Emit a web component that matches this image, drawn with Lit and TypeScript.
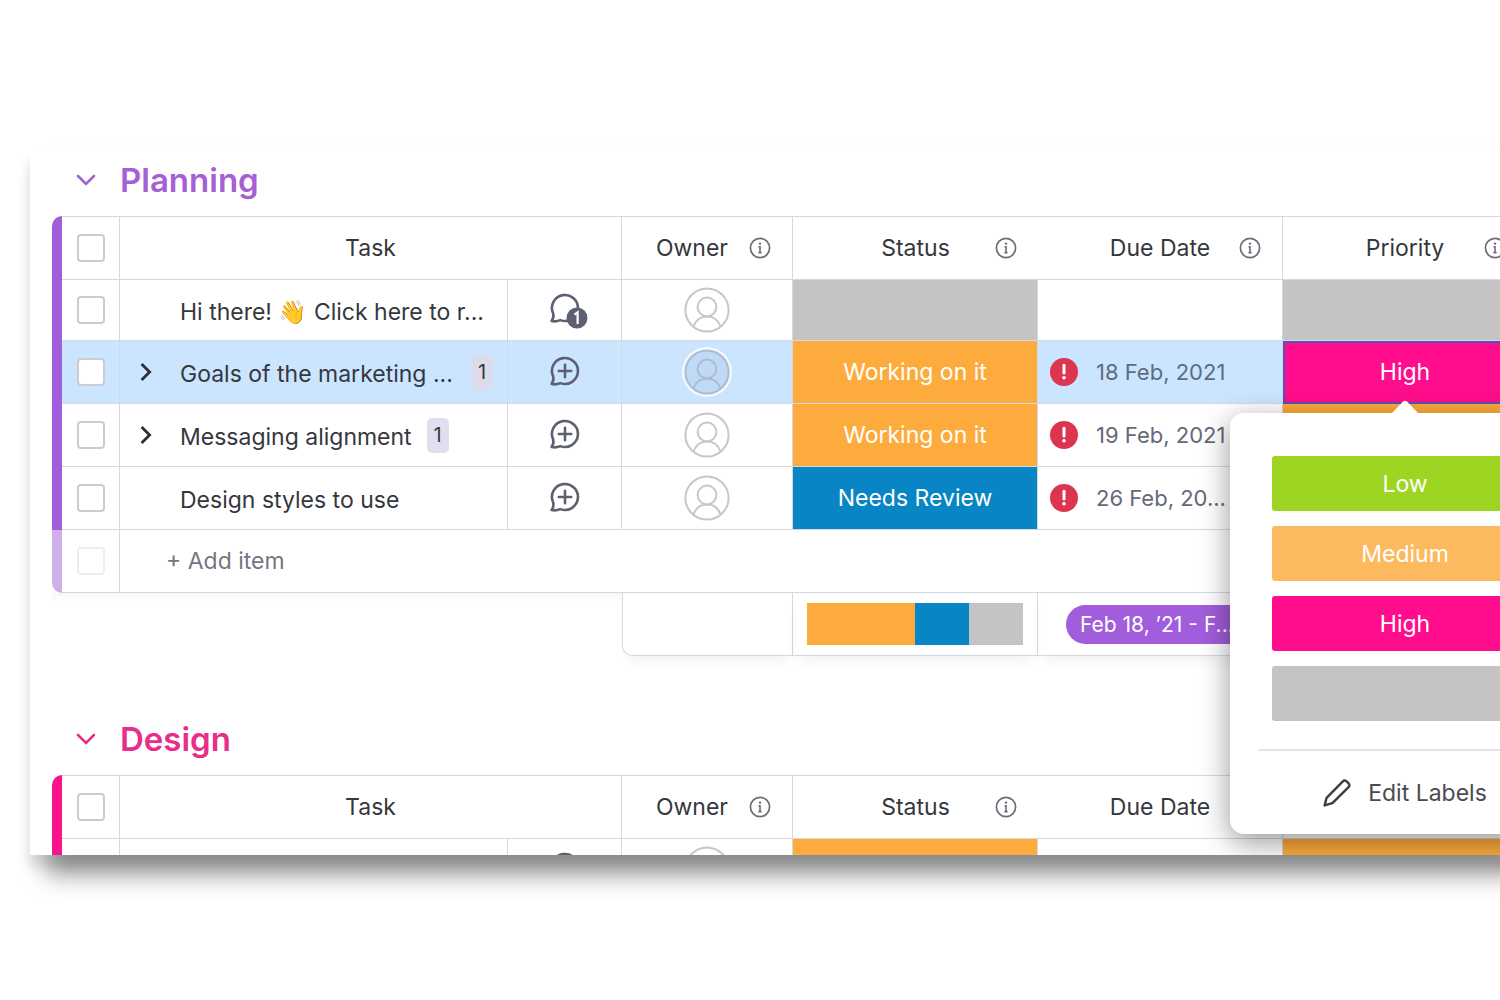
import { LitElement, html, css, nothing, type TemplateResult } from "lit";
import { customElement, property } from "lit/decorators.js";
import { classMap } from "lit/directives/class-map.js";
import { styleMap } from "lit/directives/style-map.js";

type Label = "" | "Working on it" | "Needs Review" | "Low" | "Medium" | "High";

interface Task {
  name: string;
  subitems?: number;
  truncated?: boolean;
  updates?: number;
  status: Label;
  due?: string;
  priority: Label;
  selected?: boolean;
}

interface Group {
  title: string;
  theme: "purple" | "pink";
  tasks: Task[];
  range?: string;
  pending?: boolean;
}

const LABEL_CLASS: Record<Label, string> = {
  "": "grey",
  "Working on it": "orange",
  "Needs Review": "blue",
  Low: "green",
  Medium: "amber",
  High: "magenta",
};

const GROUPS: Group[] = [
  {
    title: "Planning",
    theme: "purple",
    range: "Feb 18, ’21 - F...",
    tasks: [
      { name: "Hi there! 👋 Click here to r...", updates: 1, status: "", priority: "" },
      {
        name: "Goals of the marketing ...",
        subitems: 1,
        truncated: true,
        status: "Working on it",
        due: "18 Feb, 2021",
        priority: "High",
        selected: true,
      },
      { name: "Messaging alignment", subitems: 1, status: "Working on it", due: "19 Feb, 2021", priority: "Medium" },
      { name: "Design styles to use", status: "Needs Review", due: "26 Feb, 20...", priority: "High" },
    ],
  },
  {
    title: "Design",
    theme: "pink",
    pending: true,
    tasks: [{ name: "", updates: 1, status: "Working on it", priority: "Medium" }],
  },
];

const infoIcon = html`<svg class="info" viewBox="0 0 22 22" aria-hidden="true">
  <circle cx="11" cy="11" r="9.6" fill="none" stroke="currentColor" stroke-width="1.7" />
  <circle cx="11" cy="6.6" r="1.2" fill="currentColor" />
  <path d="M9.6 9.9H11V15.6M9.4 15.6H12.6" fill="none" stroke="currentColor" stroke-width="1.6" />
</svg>`;

const bubble = "M5.2 23.5A13 13 0 1 1 12.3 30.1C9.6 31.3 6.8 31.7 3.6 31C5.2 29 5.8 26.4 5.2 23.5Z";

const updateIcon = (count?: number) =>
  count
    ? html`<svg class="chat" viewBox="0 0 44 40" aria-hidden="true">
        <path d=${bubble} fill="none" stroke="currentColor" stroke-width="2.6" stroke-linejoin="round" />
        <circle cx="29" cy="28" r="10.5" fill="currentColor" />
        <path d="M26.4 24.6L29.6 22.4V34" fill="none" stroke="#fff" stroke-width="2.2" />
      </svg>`
    : html`<svg class="chat" viewBox="0 -1 44 40" aria-hidden="true">
        <path d=${bubble} fill="none" stroke="currentColor" stroke-width="2.6" stroke-linejoin="round" />
        <path d="M17 11.8V24.2M10.8 18H23.2" stroke="currentColor" stroke-width="2.6" stroke-linecap="round" />
      </svg>`;

const avatarIcon = html`<svg class="avatar" viewBox="0 0 52 52" aria-hidden="true">
  <circle class="ring" cx="26" cy="26" r="25" />
  <circle class="disc" cx="26" cy="26" r="21.6" />
  <circle class="line" cx="26" cy="23" r="9.4" />
  <path class="line" d="M12.5 42.5C15 35.6 20 32.6 26 32.6S37 35.6 39.5 42.5" />
</svg>`;

const alertIcon = html`<svg class="alert" viewBox="0 0 28 28" aria-hidden="true">
  <circle cx="14" cy="14" r="14" fill="#dc3550" />
  <path d="M14 7.2V15" stroke="#fff" stroke-width="3" stroke-linecap="round" />
  <circle cx="14" cy="19.8" r="1.8" fill="#fff" />
</svg>`;

const pencilIcon = html`<svg class="pencil" viewBox="0 0 28 28" aria-hidden="true">
  <path
    d="M1.6 26.4L3.6 18.8L19.6 2.6C20.8 1.4 22.4 1.4 23.6 2.4L25.6 4.4C26.6 5.6 26.6 7 25.6 8.2L9.4 24.2Z"
    fill="none"
    stroke="currentColor"
    stroke-width="2.4"
    stroke-linejoin="round"
  />
</svg>`;

@customElement("label-picker")
export class LabelPicker extends LitElement {
  static styles = css`
    :host {
      display: block;
      box-sizing: border-box;
      width: 350px;
      padding: 43px 28px 27px;
      border-radius: 14px;
      background: #fff;
      box-shadow: 0 8px 30px rgba(0, 0, 0, 0.42);
      font-family: Inter, "Open Sans", sans-serif;
    }
    .arrow {
      position: absolute;
      top: -13px;
      left: 50%;
      width: 28px;
      height: 14px;
      margin-left: -14px;
      fill: #fff;
    }
    .options {
      display: flex;
      flex-direction: column;
      gap: 15px;
      padding: 0 14px 28px;
      border-bottom: 2px solid #e2e3e8;
    }
    button {
      border: 0;
      padding: 0;
      font: inherit;
      font-size: 23px;
      line-height: 28px;
      cursor: pointer;
    }
    .option {
      height: 55px;
      border-radius: 3px;
      color: #fff;
    }
    .green {
      background: #9dd522;
    }
    .amber {
      background: #fdb95e;
    }
    .magenta {
      background: #ff0d8c;
    }
    .grey {
      background: #c4c4c4;
    }
    .edit {
      display: flex;
      align-items: center;
      justify-content: center;
      gap: 17px;
      width: 100%;
      margin-top: 28px;
      background: none;
      color: #4a4b50;
    }
    .pencil {
      width: 28px;
      height: 28px;
      color: #3c3d42;
    }
  `;

  render() {
    const options: Label[] = ["Low", "Medium", "High", ""];
    return html`
      <svg class="arrow" viewBox="0 0 28 14" aria-hidden="true"><path d="M0 14L12 1.6Q14 0 16 1.6L28 14Z" /></svg>
      <div class="options">
        ${options.map(
          (label) => html`<button class="option ${LABEL_CLASS[label]}" aria-label=${label || "No priority"}>${label}</button>`
        )}
      </div>
      <button class="edit">${pencilIcon}<span>Edit Labels</span></button>
    `;
  }
}

@customElement("board-group")
export class BoardGroup extends LitElement {
  @property({ attribute: false }) group!: Group;

  static styles = css`
    :host {
      display: block;
      --line: #d5d8e3;
    }
    .purple {
      --accent: #a25ddc;
      --accent-soft: #cfb0ea;
    }
    .pink {
      --accent: #f8148c;
      --accent-soft: #fba1d0;
    }
    .title {
      display: flex;
      align-items: center;
      gap: 24px;
      height: 60px;
      margin: 0;
      padding: 0 0 6px 24px;
      color: var(--accent);
      font-size: 33px;
      font-weight: 600;
      line-height: 40px;
    }
    .purple .title {
      color: #a460d4;
    }
    .pink .title {
      color: #e62e8a;
    }
    button {
      border: 0;
      padding: 0;
      background: none;
      color: inherit;
      font: inherit;
      cursor: pointer;
    }
    .toggle,
    .expand {
      display: flex;
    }
    .icon {
      display: block;
      margin: 0 auto;
    }
    .toggle svg {
      width: 20px;
      height: 12px;
    }
    .expand svg {
      width: 14px;
      height: 20px;
    }
    table {
      width: 100%;
      table-layout: fixed;
      border-collapse: separate;
      border-spacing: 0;
    }
    .c-bar {
      width: 10px;
    }
    .c-check {
      width: 58px;
    }
    .c-chat {
      width: 114px;
    }
    .c-owner {
      width: 171px;
    }
    .c-wide {
      width: 245px;
    }
    th,
    td {
      box-sizing: border-box;
      height: 63px;
      padding: 0;
      border-bottom: 1px solid var(--line);
      border-right: 1px solid var(--line);
      font-size: 23px;
      font-weight: 400;
      line-height: 28px;
      text-align: center;
    }
    thead th,
    thead td {
      height: 64px;
      border-top: 1px solid var(--line);
    }
    tbody tr:first-child td {
      height: 61px;
    }
    thead .open {
      border-right: 0;
    }
    td.bar {
      border: 0;
      background: var(--accent);
    }
    thead td.bar {
      border-top-left-radius: 10px;
    }
    .add td.bar {
      background: var(--accent-soft);
      border-bottom-left-radius: 10px;
    }
    .selected td {
      background: #cce5ff;
    }
    .selected td.bar {
      background: var(--accent);
    }
    input {
      appearance: none;
      display: block;
      box-sizing: border-box;
      width: 28px;
      height: 28px;
      margin: 0 auto;
      border: 2px solid #cbccd3;
      border-radius: 4px;
      background: #fff;
    }
    .add input {
      border-color: #ecedf1;
    }
    .head {
      display: grid;
      grid-template-columns: 1fr auto 1fr;
      align-items: center;
    }
    .head .info {
      grid-column: 3;
      justify-self: end;
      margin: 0 21px;
    }
    .head span {
      grid-column: 2;
    }
    .info {
      width: 22px;
      height: 22px;
      color: #6b6d77;
    }
    .task {
      display: grid;
      grid-template-columns: 60px auto auto;
      justify-content: start;
      align-items: center;
      padding-right: 14px;
      text-align: left;
    }
    .task.fill {
      grid-template-columns: 60px 1fr auto;
    }
    .name {
      grid-column: 2;
      padding-top: 4px;
      overflow: hidden;
      white-space: nowrap;
    }
    .expand {
      padding-left: 19px;
      color: #2c2f38;
    }
    .count {
      width: 22px;
      margin-left: 15px;
      border-radius: 5px;
      background: #dfdff0;
      font-size: 20px;
      line-height: 35px;
      text-align: center;
    }
    .selected .count {
      background: #dcdcec;
    }
    .chat {
      display: block;
      width: 44px;
      height: 40px;
      padding-left: 10px;
      color: #5d6070;
    }
    .avatar {
      display: block;
      width: 52px;
      height: 52px;
      fill: none;
    }
    .disc,
    .line {
      stroke: #c6c7cb;
      stroke-width: 2;
    }
    .selected .ring {
      fill: #f3f8ff;
    }
    .selected .disc {
      fill: #bfd9f6;
    }
    .selected .disc,
    .selected .line {
      stroke: #adbbcf;
    }
    td.label {
      color: #fff;
    }
    .label.grey {
      background: #c4c4c4;
    }
    .label.orange,
    .label.amber {
      background: #fdab3d;
    }
    .label.blue {
      background: #0785c4;
    }
    .label.magenta {
      background: #ff0d8c;
    }
    .editing {
      position: relative;
      outline: 2px solid #5a51b8;
      outline-offset: -2px;
    }
    label-picker {
      position: absolute;
      z-index: 2;
      top: calc(100% + 10px);
      left: 50%;
      margin-left: -175px;
    }
    .due {
      display: flex;
      align-items: center;
      gap: 18px;
      padding-left: 12px;
      color: #676879;
      font-size: 22px;
    }
    .selected .due {
      color: #5f6c80;
    }
    .alert {
      width: 28px;
      height: 28px;
    }
    .add .text {
      padding-left: 46px;
      border-right: 0;
      color: #74757f;
      text-align: left;
    }
    tfoot td {
      box-shadow: 0 8px 14px -6px rgba(0, 0, 0, 0.08);
    }
    tfoot .blank {
      border: 0;
      box-shadow: inset 0 12px 12px -12px rgba(0, 0, 0, 0.08);
    }
    tfoot .first {
      border-left: 1px solid var(--line);
      border-bottom-left-radius: 10px;
    }
    .battery {
      display: flex;
      height: 42px;
      margin: 0 14px;
    }
    .seg.orange {
      background: #fdab3d;
    }
    .seg.blue {
      background: #0785c4;
    }
    .seg.grey {
      background: #c4c4c4;
    }
    .range {
      display: block;
      margin: 0 28px;
      padding-left: 14px;
      border-radius: 20px;
      background: #a25ddc;
      color: #fff;
      font-size: 21px;
      line-height: 39px;
      text-align: left;
      white-space: nowrap;
    }
  `;

  private head(text: string, open = false): TemplateResult {
    return html`<th scope="col" class=${open ? "open" : ""}><div class="head"><span>${text}</span>${infoIcon}</div></th>`;
  }

  private row(task: Task): TemplateResult {
    const pending = this.group.pending;
    return html`<tr class=${classMap({ selected: !!task.selected })}>
      <td class="bar"></td>
      <td>${pending ? nothing : html`<input type="checkbox" aria-label="Select ${task.name}" />`}</td>
      <td>
        <div class="task ${task.truncated ? "fill" : ""}">
          ${task.subitems
            ? html`<button class="expand" aria-label="Show subitems">
                <svg viewBox="0 0 14 20"><path d="M2.6 2L10.6 10L2.6 18" fill="none" stroke="currentColor" stroke-width="2.8" /></svg>
              </button>`
            : nothing}
          <span class="name">${task.name}</span>
          ${task.subitems ? html`<span class="count">${task.subitems}</span>` : nothing}
        </div>
      </td>
      <td><button class="icon" aria-label="Updates">${updateIcon(task.updates)}</button></td>
      <td><button class="icon" aria-label="Assign owner">${avatarIcon}</button></td>
      <td class="label ${LABEL_CLASS[task.status]}">${pending ? nothing : task.status}</td>
      <td>${task.due || pending ? html`<div class="due">${alertIcon}<span>${task.due}</span></div>` : nothing}</td>
      <td class="label ${LABEL_CLASS[task.priority]} ${task.selected ? "editing" : ""}">
        ${task.selected ? html`${task.priority}<label-picker></label-picker>` : nothing}
      </td>
    </tr>`;
  }

  private battery(): TemplateResult {
    const tasks = this.group.tasks;
    const order: Label[] = ["Working on it", "Needs Review", ""];
    return html`<div class="battery">
      ${order.map((status) => {
        const share = tasks.filter((t) => t.status === status).length / tasks.length;
        return html`<div class="seg ${LABEL_CLASS[status]}" style=${styleMap({ width: `${share * 100}%` })}></div>`;
      })}
    </div>`;
  }

  private addRow(): TemplateResult {
    return html`<tr class="add">
      <td class="bar"></td>
      <td><input type="checkbox" disabled aria-label="New item" /></td>
      <td class="text" colspan="6"><button>+ Add item</button></td>
    </tr>`;
  }

  private summary(): TemplateResult {
    return html`<tfoot>
      <tr>
        <td class="blank" colspan="4"></td>
        <td class="first"></td>
        <td>${this.battery()}</td>
        <td><span class="range">${this.group.range}</span></td>
        <td></td>
      </tr>
    </tfoot>`;
  }

  render() {
    const { title, theme, tasks, pending } = this.group;
    return html`<section class=${theme}>
      <h2 class="title">
        <button class="toggle" aria-label="Collapse ${title}">
          <svg viewBox="0 0 20 12"><path d="M2 2L10 10L18 2" fill="none" stroke="currentColor" stroke-width="2.6" stroke-linecap="round" /></svg>
        </button>
        ${title}
      </h2>
      <table>
        <colgroup>
          <col class="c-bar" /><col class="c-check" /><col /><col class="c-chat" /><col class="c-owner" />
          <col class="c-wide" /><col class="c-wide" /><col class="c-wide" />
        </colgroup>
        <thead>
          <tr>
            <td class="bar"></td>
            <td><input type="checkbox" aria-label="Select all in ${title}" /></td>
            <th scope="col" colspan="2">Task</th>
            ${this.head("Owner")}${this.head("Status", true)}${this.head("Due Date")}${this.head(pending ? "" : "Priority")}
          </tr>
        </thead>
        <tbody>
          ${tasks.map((task) => this.row(task))} ${pending ? nothing : this.addRow()}
        </tbody>
        ${pending ? nothing : this.summary()}
      </table>
    </section>`;
  }
}

@customElement("app-root")
export class AppRoot extends LitElement {
  static styles = css`
    :host {
      display: flex;
      box-sizing: border-box;
      height: 100vh;
      padding: 150px 0 145px 30px;
      overflow: hidden;
      background: #fff;
      color: #36373d;
      font-family: Inter, "Open Sans", sans-serif;
    }
    .panel {
      flex: 1;
      display: flex;
      flex-direction: column;
      gap: 53px;
      box-sizing: border-box;
      margin-right: -28px;
      padding-left: 22px;
      overflow: hidden;
      background: #fff;
      box-shadow:
        -2px 12px 10px rgba(0, 0, 0, 0.1),
        16px 20px 22px rgba(0, 0, 0, 0.4);
    }
  `;

  render() {
    return html`<main class="panel">
      ${GROUPS.map((group) => html`<board-group .group=${group}></board-group>`)}
    </main>`;
  }
}
